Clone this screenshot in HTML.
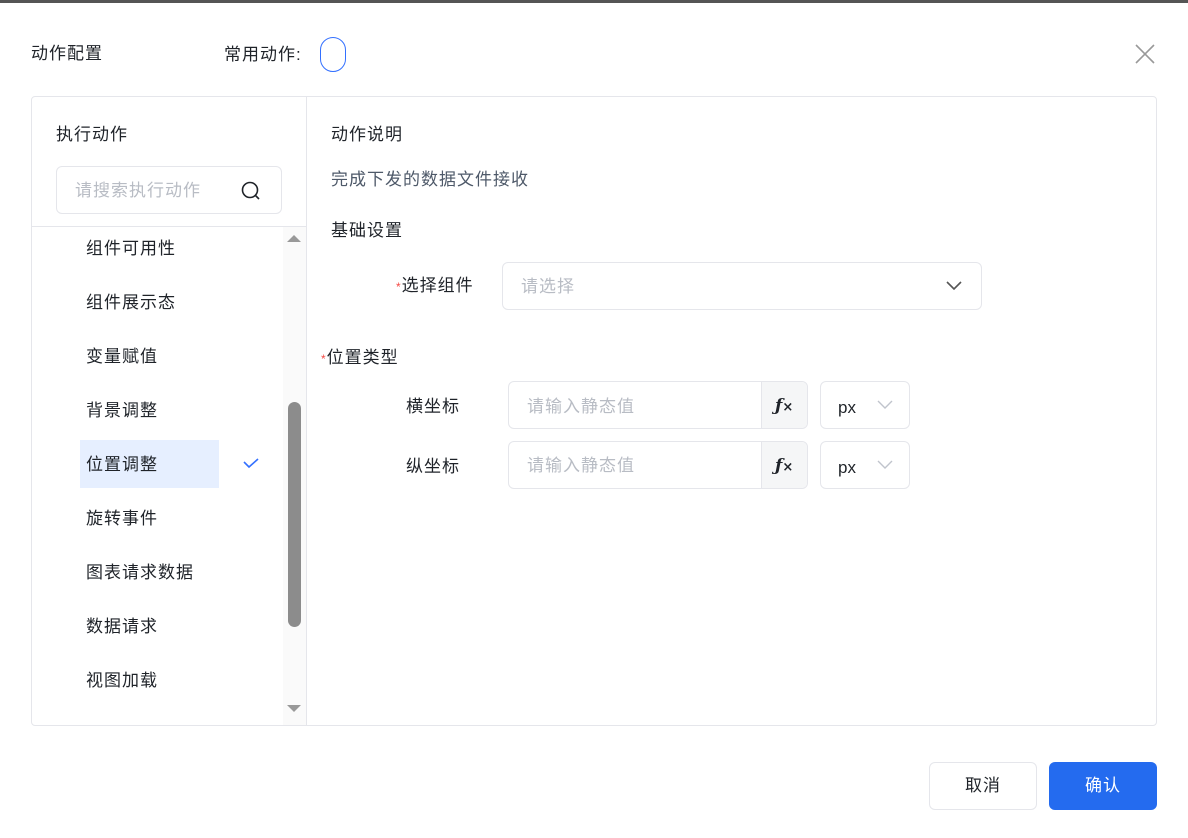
<!DOCTYPE html>
<html><head><meta charset="utf-8"><style>
*{box-sizing:border-box;margin:0;padding:0}
body{width:1188px;height:838px;background:#fff;font-family:"Liberation Sans","Noto Sans CJK SC",sans-serif;color:#1f2329;font-size:17px;letter-spacing:1px;position:relative;overflow:hidden}
.a{position:absolute}
.t{position:absolute;white-space:nowrap;line-height:22px}
.ph{color:#b8bcc4}
</style></head><body>
<div class="a" style="left:0;top:0;width:1188px;height:3px;background:#555"></div>
<div class="t" style="left:31px;top:43px">动作配置</div>
<div class="t" style="left:224px;top:44px">常用动作:</div>
<div class="a" style="left:320px;top:37px;width:26px;height:35px;border:1px solid #3370ff;border-radius:13px"></div>
<svg class="a" style="left:1134px;top:43px" width="22" height="22"><path d="M2 2L20 20M20 2L2 20" stroke="#999" stroke-width="1.6"/></svg>

<div class="a" style="left:31px;top:96px;width:1126px;height:630px;border:1px solid #e5e6eb;border-radius:4px"></div>
<div class="a" style="left:306px;top:97px;width:1px;height:628px;background:#e5e6eb"></div>
<div class="t" style="left:56px;top:124px">执行动作</div>
<div class="a" style="left:56px;top:166px;width:226px;height:48px;border:1px solid #e5e6eb;border-radius:6px"></div>
<div class="t ph" style="left:75px;top:180px">请搜索执行动作</div>
<svg class="a" style="left:240px;top:180px" width="22" height="22"><circle cx="10" cy="10" r="7.5" fill="none" stroke="#1f2329" stroke-width="1.6"/><path d="M15.5 15.5L19 19" stroke="#1f2329" stroke-width="1.6"/></svg>
<div class="a" style="left:32px;top:226px;width:274px;height:1px;background:#e5e6eb"></div>
<div class="a" style="left:283px;top:227px;width:23px;height:498px;background:#fafafa"></div>
<svg class="a" style="left:286px;top:233px" width="16" height="10"><path d="M1 9L8 2L15 9Z" fill="#999"/></svg>
<svg class="a" style="left:286px;top:704px" width="16" height="10"><path d="M1 1L8 8L15 1Z" fill="#999"/></svg>
<div class="a" style="left:288px;top:402px;width:13px;height:225px;background:#8c8c8c;border-radius:7px"></div>
<div class="a" style="left:80px;top:440px;width:139px;height:48px;background:#e6efff"></div>
<svg class="a" style="left:242px;top:456px" width="18" height="14"><path d="M2 6L7 11L16 3" fill="none" stroke="#3370ff" stroke-width="1.6"/></svg>
<div class="t" style="left:86px;top:238px">组件可用性</div>
<div class="t" style="left:86px;top:292px">组件展示态</div>
<div class="t" style="left:86px;top:346px">变量赋值</div>
<div class="t" style="left:86px;top:400px">背景调整</div>
<div class="t" style="left:86px;top:454px">位置调整</div>
<div class="t" style="left:86px;top:508px">旋转事件</div>
<div class="t" style="left:86px;top:562px">图表请求数据</div>
<div class="t" style="left:86px;top:616px">数据请求</div>
<div class="t" style="left:86px;top:670px">视图加载</div>

<div class="t" style="left:331px;top:124px">动作说明</div>
<div class="t" style="left:331px;top:169px;color:#4e5969">完成下发的数据文件接收</div>
<div class="t" style="left:331px;top:220px">基础设置</div>
<div class="t" style="left:396px;top:275px"><span style="color:#f54a45;font-size:12px">*</span>选择组件</div>
<div class="a" style="left:502px;top:262px;width:480px;height:48px;border:1px solid #e5e6eb;border-radius:6px"></div>
<div class="t ph" style="left:521px;top:276px">请选择</div>
<svg class="a" style="left:945px;top:280px" width="18" height="12"><path d="M2 2L9 9L16 2" fill="none" stroke="#555" stroke-width="1.6"/></svg>
<div class="t" style="left:321px;top:347px"><span style="color:#f54a45;font-size:12px">*</span>位置类型</div>

<div class="t" style="left:406px;top:396px">横坐标</div>
<div class="a" style="left:508px;top:381px;width:300px;height:48px;border:1px solid #e5e6eb;border-radius:6px;overflow:hidden"><div class="a" style="right:0;top:0;width:46px;height:48px;background:#f5f6f7;border-left:1px solid #e5e6eb"></div></div>
<div class="t ph" style="left:527px;top:396px">请输入静态值</div>
<div class="t" style="left:775px;top:395px;font-family:'DejaVu Serif',serif;font-style:italic;font-weight:bold;letter-spacing:0">ƒ<span style="font-style:normal;font-size:13px;font-family:'DejaVu Sans',sans-serif">×</span></div>
<div class="a" style="left:820px;top:381px;width:90px;height:48px;border:1px solid #e5e6eb;border-radius:6px"></div>
<div class="t" style="left:838px;top:397px;letter-spacing:0">px</div>
<svg class="a" style="left:876px;top:399px" width="18" height="12"><path d="M2 2L9 9L16 2" fill="none" stroke="#c0c4cc" stroke-width="1.4"/></svg>

<div class="t" style="left:406px;top:456px">纵坐标</div>
<div class="a" style="left:508px;top:441px;width:300px;height:48px;border:1px solid #e5e6eb;border-radius:6px;overflow:hidden"><div class="a" style="right:0;top:0;width:46px;height:48px;background:#f5f6f7;border-left:1px solid #e5e6eb"></div></div>
<div class="t ph" style="left:527px;top:455px">请输入静态值</div>
<div class="t" style="left:775px;top:455px;font-family:'DejaVu Serif',serif;font-style:italic;font-weight:bold;letter-spacing:0">ƒ<span style="font-style:normal;font-size:13px;font-family:'DejaVu Sans',sans-serif">×</span></div>
<div class="a" style="left:820px;top:441px;width:90px;height:48px;border:1px solid #e5e6eb;border-radius:6px"></div>
<div class="t" style="left:838px;top:457px;letter-spacing:0">px</div>
<svg class="a" style="left:876px;top:459px" width="18" height="12"><path d="M2 2L9 9L16 2" fill="none" stroke="#c0c4cc" stroke-width="1.4"/></svg>

<div class="a" style="left:929px;top:762px;width:108px;height:48px;border:1px solid #e5e6eb;border-radius:6px;text-align:center;line-height:46px">取消</div>
<div class="a" style="left:1049px;top:762px;width:108px;height:48px;background:#246bef;border-radius:6px;text-align:center;line-height:48px;color:#fff">确认</div>
</body></html>
